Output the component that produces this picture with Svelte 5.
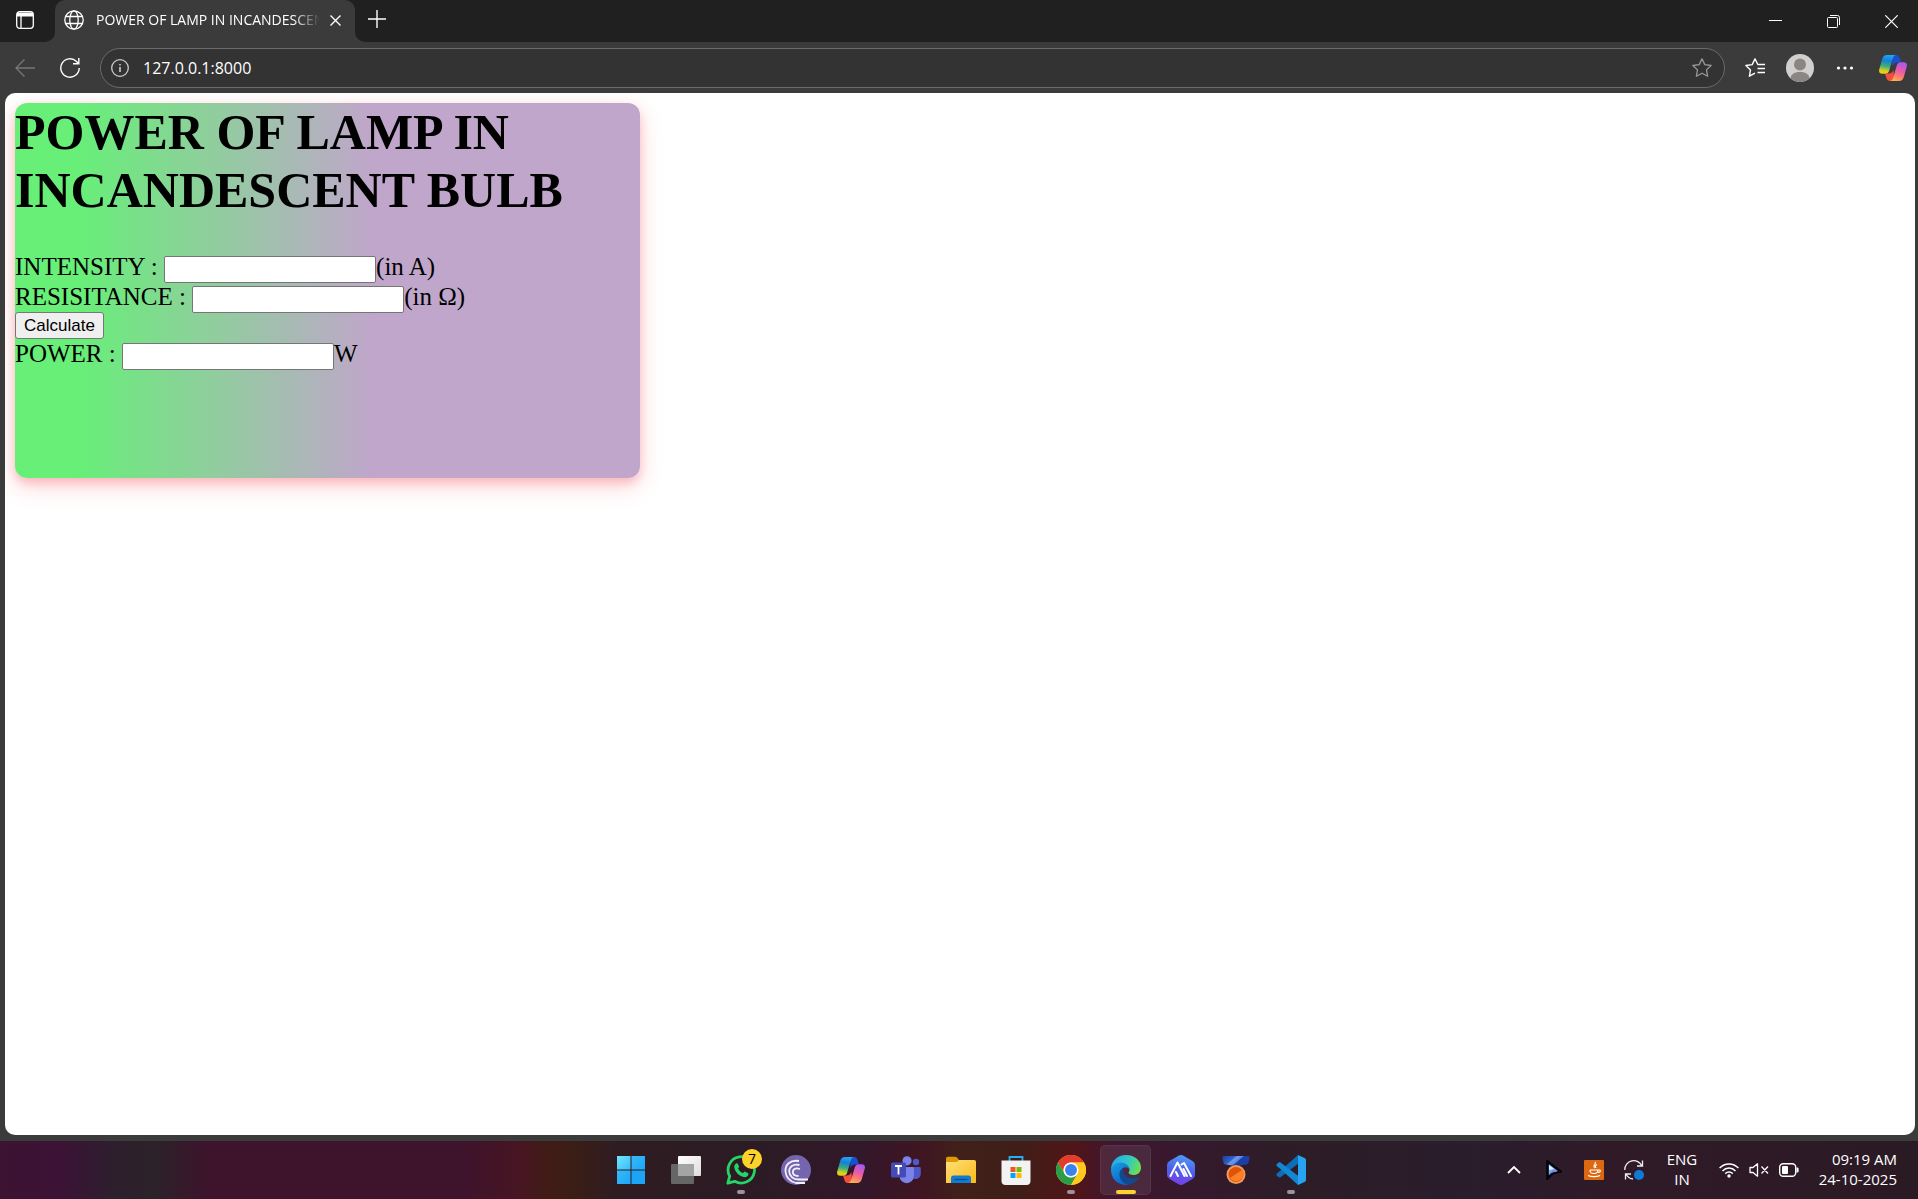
<script>
  let intensity = $state('');
  let resistance = $state('');
  let power = $state('');

  function calculate(event) {
    event.preventDefault();
    power = String(Number(intensity) ** 2 * Number(resistance));
  }
</script>

{#snippet copilot()}
  <svg width="28" height="26" viewBox="0 0 28 26" aria-hidden="true">
    <defs>
      <linearGradient id="cp-left" x1="0.5" y1="0" x2="0.35" y2="1">
        <stop offset="0" stop-color="#1fa7f0" /><stop offset="0.3" stop-color="#1680d8" />
        <stop offset="0.6" stop-color="#3fae7a" /><stop offset="0.85" stop-color="#d8d21c" /><stop offset="1" stop-color="#f7c51a" />
      </linearGradient>
      <linearGradient id="cp-right" x1="0.7" y1="0" x2="0.4" y2="1">
        <stop offset="0" stop-color="#a558f0" /><stop offset="0.45" stop-color="#ea5aa8" />
        <stop offset="0.75" stop-color="#fb7c72" /><stop offset="1" stop-color="#fdb04a" />
      </linearGradient>
    </defs>
    <path d="M13 0h4c2 0 3 1 3.600 3L22 7.500h-3.500c-2.500 0-4 1-5 3.500z" fill="#1b4fd2" />
    <path d="M15 26h-4c-2 0-3-1-3.600-3L6 18.500h3.500c2.500 0 4-1 5-3.500z" fill="#f2503c" />
    <path d="M8 0h9c-1.800.3-2.600 1.500-3.200 3.500l-3.600 12c-.7 2.200-1.800 3.300-4 3.300H3.200C.6 18.800-.5 17 .3 14.200L3.200 4C4 1.300 5.400 0 8 0z" fill="url(#cp-left)" />
    <path d="M20 26h-9c1.800-.3 2.600-1.500 3.200-3.500l3.600-12c.7-2.200 1.800-3.300 4-3.300h3c2.600 0 3.700 1.800 2.900 4.600L24.800 22c-.8 2.700-2.200 4-4.800 4z" fill="url(#cp-right)" />
  </svg>
{/snippet}

<div class="desktop">
  <header class="strip">
    <div class="lead">
      <button aria-label="Tab actions">
        <svg width="18" height="18" viewBox="0 0 18 18" fill="none" stroke="#fff" stroke-width="1.300">
          <rect x="0.700" y="0.700" width="16.600" height="16.600" rx="3" />
          <path d="M1 1.500h16v4H1z" fill="#fff" stroke="none" /><path d="M5 5v12" />
        </svg>
      </button>
    </div>
    <div class="tab-cell">
      <div class="tab">
        <svg width="20" height="20" viewBox="0 0 20 20" fill="none" stroke="#fff" stroke-width="1.300">
          <circle cx="10" cy="10" r="9.200" /><ellipse cx="10" cy="10" rx="4.200" ry="9.200" /><path d="M1.600 6.500h16.800M1.600 13.500h16.800" />
        </svg>
        <span class="title">POWER OF LAMP IN INCANDESCENT BULB</span>
        <button aria-label="Close tab">
          <svg width="11" height="11" viewBox="0 0 11 11" stroke="#fff" stroke-width="1.400"><path d="M.5.5l10 10M10.500.5l-10 10" /></svg>
        </button>
      </div>
    </div>
    <div class="rest">
      <button class="new" aria-label="New tab">
        <svg width="18" height="18" viewBox="0 0 18 18" stroke="#fff" stroke-width="1.400"><path d="M9 0v18M0 9h18" /></svg>
      </button>
      <div class="window-controls">
        <button aria-label="Minimize"><svg width="13" height="13" viewBox="0 0 13 13"><path d="M0 5.500h13" stroke="#fff" /></svg></button>
        <button aria-label="Restore">
          <svg width="13" height="13" viewBox="0 0 13 13" fill="none" stroke="#fff"><rect x="0.500" y="2.500" width="10" height="10" rx="1" /><path d="M3 .5h7.500a2 2 0 0 1 2 2V10" /></svg>
        </button>
        <button aria-label="Close"><svg width="13" height="13" viewBox="0 0 13 13" stroke="#fff" stroke-width="1.200"><path d="M.3.300l12.400 12.400M12.700.3L.3 12.700" /></svg></button>
      </div>
    </div>
  </header>

  <nav class="toolbar" aria-label="Browser toolbar">
    <button aria-label="Back">
      <svg width="20" height="18" viewBox="0 0 20 18" fill="none" stroke="#777" stroke-width="1.300"><path d="M20 9H1M9.500.5L1 9l8.500 8.500" /></svg>
    </button>
    <button aria-label="Refresh">
      <svg width="20" height="20" viewBox="0 0 20 20" fill="none" stroke="#fff" stroke-width="1.400"><path d="M19.200 10A9.200 9.200 0 1 1 16.500 3.500L18.500 5.500M18.800 0v5.800H13" /></svg>
    </button>
    <div class="address">
      <svg width="18" height="18" viewBox="0 0 18 18" fill="none" stroke="#ccc" stroke-width="1.300"><circle cx="9" cy="9" r="8.300" /><path d="M9 8v5M9 5v1.600" stroke-width="1.600" /></svg>
      <input type="text" aria-label="Address" value="127.0.0.1:8000" />
      <button aria-label="Add to favorites">
        <svg width="20" height="19" viewBox="0 0 20 19" fill="none" stroke="#999" stroke-width="1.300" stroke-linejoin="round"><path d="M10 .8l2.800 5.800 6.300.9-4.600 4.400 1.100 6.300-5.600-3-5.600 3 1.100-6.300L.9 7.500l6.300-.9z" /></svg>
      </button>
    </div>
    <button aria-label="Favorites">
      <svg width="20" height="19" viewBox="0 0 20 19" fill="none" stroke="#fff" stroke-width="1.400" stroke-linejoin="round"><path d="M14.500 6.500l-1.700 0L10 .8 7.200 6.600l-6.300.9 4.600 4.400-1.100 6.300 5.600-3M13 6.500h7M12.500 10.500H20M12.500 14.500H20" /></svg>
    </button>
    <button aria-label="Profile">
      <svg width="28" height="28" viewBox="0 0 28 28"><circle cx="14" cy="14" r="14" fill="#d2d0ce" /><circle cx="14" cy="10.500" r="6" fill="#8a8684" /><path d="M4.500 24.200C5.500 19.500 9 18 14 18s8.500 1.500 9.500 6.200A14 14 0 0 1 14 28a14 14 0 0 1-9.500-3.800z" fill="#8a8684" /></svg>
    </button>
    <button aria-label="Settings and more">
      <svg width="18" height="4" viewBox="0 0 18 4" fill="#fff"><circle cx="2.500" cy="2" r="1.600" /><circle cx="9" cy="2" r="1.600" /><circle cx="15.500" cy="2" r="1.600" /></svg>
    </button>
    <button class="side" aria-label="Copilot">{@render copilot()}</button>
  </nav>

  <div class="frame">
    <main class="page">
      <form class="card" onsubmit={calculate}>
        <h1>POWER OF LAMP IN INCANDESCENT BULB</h1>
        <div class="row"><label for="intensity">INTENSITY :</label> <input id="intensity" type="text" bind:value={intensity} />(in A)</div>
        <div class="row"><label for="resistance">RESISITANCE :</label> <input id="resistance" type="text" bind:value={resistance} />(in Ω)</div>
        <button type="submit">Calculate</button>
        <div class="row"><label for="power">POWER :</label> <input id="power" type="text" bind:value={power} />W</div>
      </form>
    </main>
  </div>

  <footer class="taskbar">
    <div class="apps">
      <button aria-label="Start">
        <svg width="30" height="30" viewBox="0 0 30 30">
          <defs><linearGradient id="win" x1="0" y1="0" x2="1" y2="1"><stop offset="0" stop-color="#6fe9fd" /><stop offset="1" stop-color="#39b9f8" /></linearGradient>
            <linearGradient id="win2" x1="0" y1="0" x2="1" y2="1"><stop offset="0" stop-color="#45c4fa" /><stop offset="1" stop-color="#0f9bf5" /></linearGradient></defs>
          <path d="M1 1h13.500v13.500H1z" fill="url(#win)" /><path d="M15.500 1H29v13.500H15.500zM1 15.500h13.500V29H1z" fill="url(#win2)" /><path d="M15.500 15.500H29V29H15.500z" fill="#1ca4f7" />
        </svg>
      </button>
      <button aria-label="Task view">
        <svg width="30" height="28" viewBox="0 0 30 28">
          <defs><linearGradient id="tv" x1="0" y1="0" x2="1" y2="1"><stop offset="0" stop-color="#fff" /><stop offset="1" stop-color="#ddd" /></linearGradient></defs>
          <rect x="7" y="0" width="23" height="20" rx="1" fill="url(#tv)" /><rect x="0" y="8" width="23" height="20" rx="1" fill="#666" /><path d="M7 8h16v12H7z" fill="#a4a4a4" />
        </svg>
      </button>
      <button class="running" aria-label="WhatsApp, 7 unread">
        <svg width="30" height="30" viewBox="0 0 30 30" fill="none">
          <path d="M1.800 28.200l1.900-7a13.200 13.200 0 1 1 5 5.100z" stroke="#25d366" stroke-width="2.800" stroke-linejoin="round" />
          <path d="M10 8.500c.8-.6 1.500-.4 1.900.5l1 2.200c.3.600-.1 1.200-.9 2.200 1.200 2.300 3 3.800 5.200 4.700 1-1.200 1.400-1.700 2-1.400l2.600 1.300c.8.400.8 1.200.3 2.200-.8 1.500-2.500 2.200-4.300 1.900C13 21.300 8.800 16.300 8.300 12.500c-.2-1.500.5-3.100 1.700-4z" fill="#25d366" />
        </svg>
        <span class="badge">7</span>
      </button>
      <button aria-label="BitTorrent">
        <svg width="30" height="30" viewBox="0 0 30 30" fill="none" stroke="#f3effa" stroke-width="1.800">
          <circle cx="15" cy="15" r="15" fill="#7565ae" stroke="none" />
          <path d="M18 6C9 4.500 4 10 4.500 16.500 5 22 9 26.500 15 28h9M18.500 10C12 8.500 8 12 8.200 16.500c.3 5 4.300 8 9.300 8H27M19 14c-4.500-1.500-7.200 0-7.200 3 0 2.500 2.500 4 5.700 4" />
        </svg>
      </button>
      <button aria-label="Copilot">{@render copilot()}</button>
      <button aria-label="Microsoft Teams">
        <svg width="30" height="28" viewBox="0 0 30 28">
          <circle cx="25" cy="6" r="3.200" fill="#5059c9" /><path d="M20 11h8.500a1.300 1.300 0 0 1 1.300 1.300v5.200c0 3-2 5.500-5 5.500s-4.800-2-4.800-5z" fill="#4f58c8" />
          <circle cx="16" cy="4.800" r="4.600" fill="#7b83eb" /><path d="M9.500 11h12a1.400 1.400 0 0 1 1.400 1.400V20a7.200 7.200 0 0 1-14.400 0z" fill="#7b83eb" />
          <rect x="0" y="6.500" width="15" height="15" rx="1.500" fill="#444bb8" /><path d="M4 10h7M7.500 10v8.500" stroke="#fff" stroke-width="1.800" />
        </svg>
      </button>
      <button aria-label="File Explorer">
        <svg width="30" height="28" viewBox="0 0 30 28">
          <defs><linearGradient id="fold" x1="0" y1="0" x2="1" y2="1"><stop offset="0" stop-color="#ffe07a" /><stop offset="1" stop-color="#fbb917" /></linearGradient></defs>
          <path d="M0 3c0-1.500.7-2.200 2-2.200h7c1 0 1.600.4 2.200 1L13 4v5H0z" fill="#dd9a05" /><path d="M0 6h11l2-2h15c1.300 0 2 .7 2 2v21H0z" fill="url(#fold)" />
          <path d="M5 27v-5a2.500 2.500 0 0 1 2.500-2.500h15A2.500 2.500 0 0 1 25 22v5z" fill="#117ad1" /><path d="M8.500 23.500h13" stroke="#0b4f91" stroke-width="1.300" />
        </svg>
      </button>
      <button aria-label="Microsoft Store">
        <svg width="30" height="30" viewBox="0 0 30 30">
          <path d="M8.500 7V2h13v5" fill="none" stroke="#22b1ef" stroke-width="1.800" /><path d="M.5 5.500h29V26c0 2.500-1.500 4-4 4h-21c-2.500 0-4-1.500-4-4z" fill="#f2f2f2" />
          <path d="M9.500 12h5v5h-5z" fill="#f35325" /><path d="M15.500 12h5v5h-5z" fill="#7fba00" /><path d="M9.500 18h5v5h-5z" fill="#05a6f0" /><path d="M15.500 18h5v5h-5z" fill="#ffba08" />
        </svg>
      </button>
      <button class="running" aria-label="Google Chrome">
        <svg width="30" height="30" viewBox="0 0 30 30">
          <circle cx="15" cy="15" r="15" fill="#fdc91f" /><path d="M2 7.500A15 15 0 0 1 28 7.500H15a7.500 7.500 0 0 0-6.500 11.300z" fill="#e33b2e" />
          <path d="M2 7.500l6.500 11.300a7.500 7.500 0 0 0 13 0L15 30A15 15 0 0 1 2 7.500z" fill="#2a9d49" /><path d="M28 7.500A15 15 0 0 1 15 30l6.500-11.300A7.500 7.500 0 0 0 15 7.500z" fill="#fdc91f" />
          <circle cx="15" cy="15" r="7.500" fill="#fff" /><circle cx="15" cy="15" r="6" fill="#3b82ee" />
        </svg>
      </button>
      <button class="running active" aria-label="Microsoft Edge">
        <svg width="30" height="30" viewBox="0 0 30 30">
          <defs>
            <linearGradient id="edge-top" x1="0" y1="0.300" x2="1" y2="0.600"><stop offset="0" stop-color="#27a7e8" /><stop offset="0.500" stop-color="#30c6c9" /><stop offset="1" stop-color="#6be04f" /></linearGradient>
            <linearGradient id="edge-body" x1="0" y1="0" x2="0.600" y2="1"><stop offset="0" stop-color="#1ba0e6" /><stop offset="1" stop-color="#0b62c4" /></linearGradient>
          </defs>
          <path d="M0 15C0 6 6.500 0 15 0c9 0 15 6 15 12.500 0 5-3.500 7.500-7.500 7.500-3 0-5-1-5-2.200 0-.8 1-1.200 1-3 0-3-3.500-5.800-7.800-5.800C5 9 1.500 11.500 0 15z" fill="url(#edge-top)" />
          <path d="M0 15c1-4 4.500-7.500 9.500-7.500 5 0 9 3 9 6.800-1-1.300-2.300-2-3.800-2-3 0-5.200 2.500-5.200 6 0 5 4 9.500 9.500 9.500 0 0-.8 2.200-4 2.200C6.500 30 0 23.500 0 15z" fill="url(#edge-body)" />
          <path d="M12.500 13c-2.500.8-4.200 3.500-4 6.800.4 5.500 4.500 9.500 9.500 9.900 4-.7 7.800-3.300 9.800-6.700.3-.7-.2-1.100-.9-.8-5 2.300-13.400.8-14.400-5.200-.2-1.500-.2-2.800 0-4z" fill="#10498f" />
        </svg>
      </button>
      <button aria-label="AI assistant">
        <svg width="28" height="30" viewBox="0 0 28 30">
          <defs><linearGradient id="hex" x1="0.600" y1="0" x2="0.400" y2="1"><stop offset="0" stop-color="#4f9cf5" /><stop offset="0.500" stop-color="#4b62ea" /><stop offset="1" stop-color="#7a3fe8" /></linearGradient></defs>
          <path d="M11.500.8a5 5 0 0 1 5 0l9 5.200A5 5 0 0 1 28 10.300v9.400a5 5 0 0 1-2.500 4.300l-9 5.200a5 5 0 0 1-5 0l-9-5.200A5 5 0 0 1 0 19.700v-9.400A5 5 0 0 1 2.500 6z" fill="url(#hex)" />
          <path d="M3.500 21L10.500 7.500 17.500 21M11 21l-2-4M14.500 9.500L17 8l7 13M20 21l-3.500-7" fill="none" stroke="#fff" stroke-width="2" stroke-linecap="round" stroke-linejoin="round" />
        </svg>
      </button>
      <button aria-label="Medal">
        <svg width="28" height="28" viewBox="0 0 28 28">
          <defs><linearGradient id="ribbon" x1="0" y1="0" x2="1" y2="0.400"><stop offset="0" stop-color="#1b3c9c" /><stop offset="0.400" stop-color="#2f60c8" /><stop offset="0.500" stop-color="#6f9af0" /><stop offset="0.650" stop-color="#5584e4" /><stop offset="0.700" stop-color="#1d3ea4" /></linearGradient></defs>
          <path d="M2 0h24c1.500 0 2 1 1.500 2.500l-1 4c-.4 1.300-1 1.800-2.300 2L18 9.500h-8l-6.200-1c-1.300-.2-1.900-.7-2.300-2l-1-4C0 1 .5 0 2 0z" fill="url(#ribbon)" />
          <circle cx="14" cy="18.500" r="9.500" fill="#f39a58" /><circle cx="14" cy="18.500" r="7.500" fill="#e05206" /><path d="M8 22a7 7 0 0 0 12-8z" fill="#fb8128" />
        </svg>
      </button>
      <button class="running" aria-label="Visual Studio Code">
        <svg width="30" height="30" viewBox="0 0 30 30">
          <path d="M22 0L4.500 15.500 1 18.500c-.8.600-.8 1.500 0 2.200l1.500 1.400c.6.500 1.300.5 2 .1L23 8z" fill="#0b6fb8" /><path d="M22 30L4.500 14 1 11.200c-.8-.6-.8-1.500 0-2.200l1.500-1.400c.6-.5 1.300-.5 2-.1L23 21.500z" fill="#1487d4" />
          <path d="M22 0l7 3.200c.7.400 1 .9 1 1.700v20.200c0 .8-.3 1.300-1 1.700L22 30z" fill="#27a3f2" />
        </svg>
      </button>
    </div>
    <div class="tray">
      <button class="slot" aria-label="Show hidden icons"><svg width="14" height="8" viewBox="0 0 14 8" fill="none" stroke="#fff" stroke-width="1.800"><path d="M1 7l6-6 6 6" /></svg></button>
      <button class="slot" aria-label="Pointer tool">
        <svg width="16" height="20" viewBox="0 0 16 20"><path d="M1.500 1.500L14.500 11.500 7 13l-5.500 5.500z" fill="#6cb5f2" stroke="#05040a" stroke-width="2.600" /><path d="M3 5l5 4-5 1z" fill="#d8f3ff" /><path d="M3 14l4-4 5 1.500-5 1z" fill="#9c70d8" /></svg>
      </button>
      <button class="slot" aria-label="Java">
        <svg width="20" height="20" viewBox="0 0 20 20" fill="none" stroke="#fff" stroke-width="1.200"><rect width="20" height="20" rx="1" fill="#dc6811" stroke="none" /><path d="M11 2c2 2-3 3-.5 6M13 4.500c-2 1-2 2-1 3.500M6 10h8M6 10c0 3 1 3.500 4 3.500s4-1 4-3.500h1.500c1.500 0 1 2.500-1.500 2.500M4 15.500c3 1.500 9 1.500 12 0" /></svg>
      </button>
      <button class="slot" aria-label="Windows Update">
        <svg width="20" height="20" viewBox="0 0 20 20" fill="none" stroke="#eee" stroke-width="1.300"><path d="M.8 10A9 9 0 0 1 18 6M18.500.5V6H13M9 19a9 9 0 0 1-7-5M1.500 19.500V14H7" /><circle cx="15" cy="15" r="5" fill="#0f7ad8" stroke="none" /></svg>
      </button>
      <button class="lang"><span>ENG</span><span>IN</span></button>
      <button class="status" aria-label="Network, volume and battery">
        <svg width="20" height="16" viewBox="0 0 20 16" fill="none" stroke="#fff" stroke-width="1.500"><path d="M.6 6a13 13 0 0 1 18.800 0M3.500 8.900a9 9 0 0 1 13 0M6.300 11.600a5.200 5.200 0 0 1 7.400 0" /><circle cx="10" cy="14" r="1.700" fill="#fff" stroke="none" /></svg>
        <svg width="20" height="14" viewBox="0 0 20 14" fill="none" stroke="#fff" stroke-width="1.300" stroke-linejoin="round"><path d="M1 4.500h3L8.500.8v12.400L4 9.500H1zM12.500 3.500l6.500 7M19 3.500l-6.500 7" /></svg>
        <svg width="20" height="14" viewBox="0 0 20 14" fill="none" stroke="#fff" stroke-width="1.400"><rect x="0.700" y="0.700" width="16" height="12.600" rx="3.500" /><rect x="3" y="3" width="6" height="8" rx="1" fill="#fff" stroke="none" /><path d="M17.500 4.500v5h.8a1.300 1.300 0 0 0 1.300-1.300V5.800a1.300 1.300 0 0 0-1.300-1.300z" fill="#fff" stroke="none" /></svg>
      </button>
      <button class="clock"><span>09:19 AM</span><span>24-10-2025</span></button>
    </div>
  </footer>
</div>

<style>
  :global(body) { margin: 0; }
  .desktop {
    display: flex; flex-direction: column; min-height: 100vh;
    background: #3b3b3b; color: #fff; font-family: "Open Sans", "Noto Sans", sans-serif;
  }
  svg { display: block; flex: none; }
  .strip button, .toolbar button, .taskbar button {
    display: flex; align-items: center; justify-content: center;
    border: 0; padding: 0; background: none; color: inherit; font: inherit;
  }

  .strip { display: flex; height: 42px; }
  .lead { width: 55px; background: #202020; border-radius: 0 0 10px 0; }
  .lead button { width: 50px; height: 40px; }
  .tab-cell { width: 300px; background: linear-gradient(#202020 50%, #3b3b3b 50%); }
  .tab {
    display: flex; align-items: center; box-sizing: border-box; height: 42px;
    padding: 0 8px 2px 9px; border-radius: 10px 10px 0 0; background: #3b3b3b;
  }
  .title {
    flex: 1; min-width: 0; margin-left: 12px; overflow: hidden; white-space: nowrap; font-size: 14px; line-height: 20px;
    mask-image: linear-gradient(to right, #000 88%, transparent 100%);
  }
  .tab button { width: 24px; height: 24px; margin-left: 3px; }
  .rest { display: flex; flex: 1; justify-content: space-between; overflow: hidden; background: #202020; border-radius: 0 0 0 10px; }
  .new { width: 44px; height: 38px; }
  .window-controls { display: flex; margin-right: -2px; }
  .window-controls button { width: 58px; height: 42px; }

  .toolbar { display: flex; align-items: center; height: 51px; padding-left: 2px; }
  .toolbar button { width: 45px; height: 40px; }
  .address {
    display: flex; flex: 1; align-items: center; box-sizing: border-box; height: 40px; margin: 0 7px 0 8px;
    padding-left: 10px; border: 1px solid #6b6b6b; border-radius: 20px; background: #333;
  }
  .address input { flex: 1; margin-left: 14px; padding: 0; border: 0; outline: 0; background: none; color: #fff; font: inherit; font-size: 16px; }
  .toolbar button.side { width: 51px; }

  .frame { display: flex; flex: 1; padding: 0 3px 6px 5px; }
  .page {
    flex: 1; padding: 10px; overflow: hidden; border-radius: 10px; background: #fff; color: #000;
    font-family: "Liberation Serif", serif; font-size: 25px;
  }
  .card {
    box-sizing: border-box; width: 100%; max-width: 625px; min-height: 375px; border-radius: 12px;
    background: linear-gradient(to right, #67ef78 10%, #c0a6ca 57%);
    box-shadow: 0 5px 10px rgba(240, 30, 40, 0.2), 0 8px 25px rgba(240, 30, 40, 0.19);
  }
  h1 { margin: 0 0 33px; font-size: 50px; line-height: 58px; }
  .row { height: 30px; line-height: 29px; }
  .card input {
    box-sizing: border-box; width: 212px; height: 27px; margin: 0; padding: 2px 3px 0;
    border: 1px solid #767676; border-radius: 2px; background: #fff; font: 17px "Liberation Sans", sans-serif;
  }
  .card button {
    display: block; height: 27px; padding: 0 8px; border: 1px solid #767676; border-radius: 3px;
    background: #efefef; color: #000; font: 17px "Liberation Sans", sans-serif;
  }

  .taskbar {
    display: grid; grid-template-columns: 1fr auto 1fr; align-items: center; box-sizing: border-box; height: 58px; padding-left: 3px;
    background: linear-gradient(to right, #3d1332 0, #3c1236 3%, #2d1f2d 6%, #2c2229 8%, #3e132c 11%, #3e132c 24%, #471523 27%, #411c16 28.500%, #3a1e16 30%, #2f1c22 32%, #2c1b24 40%, #33172a 45%, #3f1522 48%, #41201a 50%, #3f1e18 53%, #501518 56%, #3f162f 58%, #341a2c 63%, #2c1d27 68%, #2a1d2c 77%, #301a28 84%, #2a1a24 100%);
  }
  .apps { display: flex; grid-column: 2; }
  .apps button { position: relative; width: 51px; height: 50px; margin: 0 2px; border-radius: 5px; }
  .apps .active { background: rgba(255, 255, 255, 0.08); box-shadow: inset 0 0 0 1px rgba(255, 255, 255, 0.06); }
  .running::after {
    content: ""; position: absolute; bottom: 1px; left: 50%; width: 8px; height: 4px; margin-left: -4px;
    border-radius: 2px; background: #9d9299;
  }
  .active::after { width: 20px; margin-left: -10px; background: #fdd22a; }
  .badge {
    position: absolute; top: 4px; right: 4px; width: 20px; height: 20px; border-radius: 50%;
    background: #fdd22a; color: #000; font-size: 14px; line-height: 20px;
  }
  .tray { display: flex; align-items: center; justify-content: flex-end; padding-right: 21px; font-size: 15px; line-height: 20px; }
  .taskbar .slot { width: 40px; height: 50px; }
  .taskbar .lang { flex-direction: column; width: 56px; padding-bottom: 2px; }
  .taskbar .status { gap: 10px; margin: 0 8px 0 9px; }
  .taskbar .clock { flex-direction: column; align-items: flex-end; width: 90px; padding-bottom: 2px; }
</style>
